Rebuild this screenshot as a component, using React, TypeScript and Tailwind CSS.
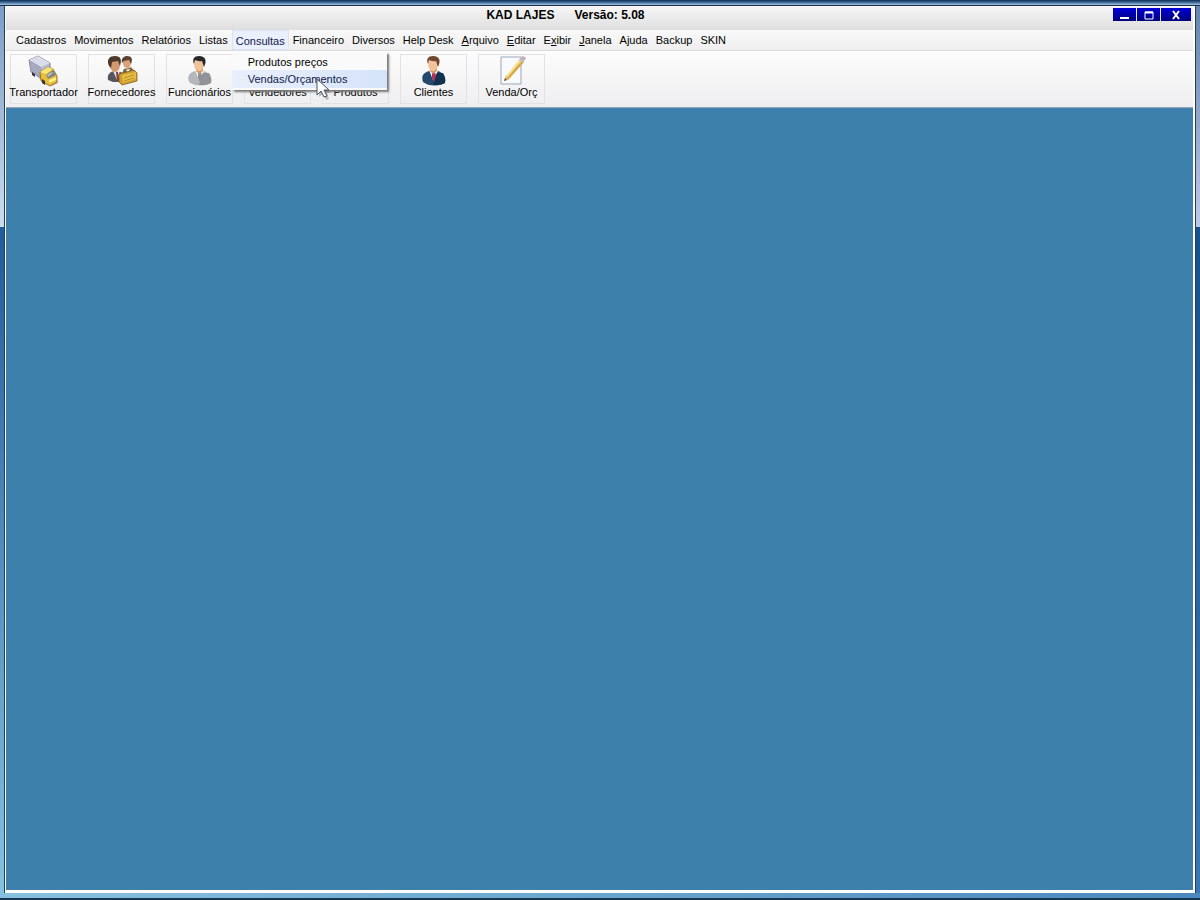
import React, { useState } from 'react'

interface MenuEntry {
  label: string
  hotkey?: number
}

const menus: MenuEntry[] = [
  { label: 'Cadastros' },
  { label: 'Movimentos' },
  { label: 'Relatórios' },
  { label: 'Listas' },
  { label: 'Consultas' },
  { label: 'Financeiro' },
  { label: 'Diversos' },
  { label: 'Help Desk' },
  { label: 'Arquivo', hotkey: 0 },
  { label: 'Editar', hotkey: 0 },
  { label: 'Exibir', hotkey: 1 },
  { label: 'Janela', hotkey: 0 },
  { label: 'Ajuda' },
  { label: 'Backup' },
  { label: 'SKIN' },
]

const consultas = ['Produtos preços', 'Vendas/Orçamentos']

const TruckIcon = () => (
  <svg viewBox="0 0 32 32" className="h-8 w-8" aria-hidden="true">
    <path d="M4 18l4 2 9 9 7 2 6-3-1-4z" fill="#77736a" opacity=".5" />
    <path d="M1 5L10 1l12 7v8l-9 7L3 17z" fill="#b9bbcf" stroke="#65657c" strokeWidth=".8" />
    <path d="M1 5L10 1l12 7-9 4z" fill="#dcddeb" />
    <path d="M1 5l12 7v11L3 17z" fill="#a3a5bd" />
    <path d="M4 9l8 5M4 12l8 5M5 15l7 4" stroke="#b7b9cd" strokeWidth=".6" />
    <path d="M12 17l8-5 5 2 4 7v6l-7 4-9-5z" fill="#e9bd35" stroke="#8d6817" strokeWidth=".8" />
    <path d="M12 17l8-5 5 2-7 5z" fill="#fbe577" />
    <path d="M18 20l7-5 3 5-8 4z" fill="#7f8587" />
    <path d="M19 20l5-3 1 1-5 4z" fill="#b9c0c3" />
    <path d="M21 25l7-3v3l-7 3z" fill="#fff08d" />
    <path d="M4 17l3 2v3l-3-2zM14 24l3 2v4l-3-2z" fill="#34343a" />
  </svg>
)

const SuppliersIcon = () => (
  <svg viewBox="0 0 32 32" className="h-8 w-8" aria-hidden="true">
    <path d="M2 25c-1-6 2-8 6-9l7 1 3 4v6H7z" fill="#55555a" />
    <path d="M7 16l4 9 3-9z" fill="#e5e3e6" />
    <path d="M10 17h2l1 8-2 1z" fill="#8a3a48" />
    <ellipse cx="9" cy="10" rx="5" ry="7" fill="#d39a70" />
    <path d="M3 11C0 4 4 1 9 1c6 0 7 4 5 10l-2-5-6 1-1 6z" fill="#4d382b" />
    <path d="M16 18l3-5 5-1 5 4v7H16z" fill="#66656a" />
    <path d="M19 13l3 5 3-6z" fill="#f5f3f3" />
    <ellipse cx="21" cy="8" rx="4" ry="5" fill="#dba27a" />
    <path d="M16 8c-1-5 2-7 5-7 5 0 6 3 4 8l-2-4-5 1z" fill="#5c4331" />
    <path d="M13 19l15-4 3 3v8l-15 4-3-3z" fill="#cf9d2b" stroke="#84621f" strokeWidth=".8" />
    <path d="M18 18v-3l7-2v3" fill="none" stroke="#8b6722" strokeWidth="1.2" />
    <path d="M16 20l14-3v7l-13 4z" fill="#e6bd43" />
    <path d="M18 23l10-3M18 26l10-3" stroke="#a9802a" strokeWidth=".8" />
  </svg>
)

interface PersonProps {
  hair: string
  coat: string
  shade: string
  tie: string
}

const PersonIcon = ({ hair, coat, shade, tie }: PersonProps) => (
  <svg viewBox="0 0 32 32" className="h-8 w-8" aria-hidden="true">
    <path d="M5 27c-2-6 0-9 6-11h9c6 2 7 6 7 12-6 3-16 4-22-1z" fill={coat} />
    <path d="M18 18l7 0c2 3 3 7 2 10-5 3-9 2-12 2z" fill={shade} />
    <path d="M11 15l4 10 5-9-4-3z" fill="#f7f7f7" />
    <path d="M14 18l3-1 1 4-2 6-2-4z" fill={tie} />
    <path d="M12 10h7v6l-4 3-3-3z" fill="#d99868" />
    <ellipse cx="15" cy="9" rx="5" ry="7" fill="#f1c39b" />
    <path d="M10 9C8 4 10 1 15 1c7 0 8 5 5 11l-2-6c-3 1-6-1-7-1z" fill={hair} />
  </svg>
)

const BoxIcon = () => (
  <svg viewBox="0 0 32 32" className="h-8 w-8" aria-hidden="true">
    <path d="M4 9l12-6 12 6v14l-12 7-12-7z" fill="#d8a85a" />
    <path d="M4 9l12 6 12-6-12-6z" fill="#f2d08d" />
  </svg>
)

const NoteIcon = () => (
  <svg viewBox="0 0 32 32" className="h-8 w-8" aria-hidden="true">
    <path d="M5 2h20v27H5z" fill="#f8fafd" stroke="#9aa6bb" />
    <path d="M9 23l-1 3 4-1L28 7l-4-3z" fill="#f0cd76" />
    <path d="M9 22l3 3L28 7l-2-1z" fill="#d9aa4c" />
    <path d="M10 21L23 5l2 1-14 17z" fill="#fbe08f" />
    <path d="M23 5l2-3 4 2-2 4z" fill="#b7bccb" />
    <path d="M25 2l2-1 3 2-1 2z" fill="#d1a5a8" />
    <path d="M8 26l1-3 2 2z" fill="#5d5445" />
  </svg>
)

const tools = [
  { label: 'Transportador', icon: <TruckIcon /> },
  { label: 'Fornecedores', icon: <SuppliersIcon /> },
  { label: 'Funcionários', icon: <PersonIcon hair="#292727" coat="#b5b8bb" shade="#909498" tie="#8b9197" /> },
  { label: 'Vendedores', icon: <PersonIcon hair="#292727" coat="#b5b8bb" shade="#909498" tie="#8b9197" /> },
  { label: 'Produtos', icon: <BoxIcon /> },
  { label: 'Clientes', icon: <PersonIcon hair="#71462d" coat="#22486d" shade="#12304f" tie="#b33058" /> },
  { label: 'Venda/Orç', icon: <NoteIcon /> },
]

const MenuLabel = ({ label, hotkey }: MenuEntry) => {
  if (hotkey === undefined) return <>{label}</>
  return (
    <>
      {label.slice(0, hotkey)}
      <span className="underline underline-offset-1">{label[hotkey]}</span>
      {label.slice(hotkey + 1)}
    </>
  )
}

const Cursor = () => (
  <svg viewBox="0 0 16 24" className="pointer-events-none absolute left-[84px] top-12 z-20 h-6 w-4" aria-hidden="true">
    <path d="M3 3v16l4-3 3 6 3-1-2-6h4z" fill="#555" opacity=".35" />
    <path d="M1 1v16l4-4 3 6 3-1-3-6h5z" fill="#fff" stroke="#4a5060" />
  </svg>
)

const TitleBar = () => (
  <header className="grid h-6 grid-cols-[1fr_auto_1fr] bg-gradient-to-b from-[#f7f7f7] to-[#dedede]">
    <h1 className="col-start-2 flex gap-5 pr-17 pt-px text-[12px] leading-4 font-bold">
      <span>KAD LAJES</span>
      <span>Versão: 5.08</span>
    </h1>
    <div className="flex justify-end gap-px pr-0.5 pt-0.5">
      <button aria-label="Minimizar" className="flex h-[13px] w-[23px] items-center justify-center bg-gradient-to-b from-[#0000d8] to-[#00007e]">
        <svg viewBox="0 0 10 10" className="h-2.5 w-2.5"><path d="M0 8h9" stroke="#fff" strokeWidth="2" /></svg>
      </button>
      <button aria-label="Maximizar" className="flex h-[13px] w-[23px] items-center justify-center bg-gradient-to-b from-[#0000d8] to-[#00007e]">
        <svg viewBox="0 0 10 10" className="h-2.5 w-2.5"><path d="M1 2h8v7H1z" fill="none" stroke="#fff" /><path d="M1 2.5h8" stroke="#fff" strokeWidth="2" /></svg>
      </button>
      <button aria-label="Fechar" className="flex h-[13px] w-[30px] items-center justify-center bg-gradient-to-b from-[#0000d8] to-[#00007e]">
        <svg viewBox="0 0 10 10" className="h-2.5 w-2.5"><path d="M2 1l6 8M8 1L2 9" stroke="#fff" strokeWidth="2" /></svg>
      </button>
    </div>
  </header>
)

const App = () => {
  const [open, setOpen] = useState('Consultas')

  return (
    <div className="flex min-h-screen flex-col bg-[#236aaa] font-['Liberation_Sans',Arial,sans-serif] text-[11px] text-black">
      {/* top frame */}
      <div className="h-1.5 border-b border-[#1b3046] bg-gradient-to-b from-[#122c4c] via-[#426fa2] to-[#a6c5df]"></div>
      <div className="flex grow">
        {/* left frame */}
        <div className="flex w-[5px] flex-col border-r border-[#243e5d]">
          <div className="h-[221px] bg-gradient-to-b from-[#7e9cc4] to-[#c9dcf0]"></div>
          <div className="grow bg-gradient-to-b from-[#1d5c9d] to-[#82c3e3]"></div>
        </div>
        <div className="flex min-w-0 grow flex-col border-r-2 border-b-[3px] border-l border-white">
          <TitleBar />
          <nav className="relative z-10 flex h-5 bg-gradient-to-b from-[#f9f9f9] to-[#efefef] pl-1.5">
            {menus.map((m) => (
              <div key={m.label} className="relative">
                <button
                  onClick={() => setOpen(open === m.label ? '' : m.label)}
                  className={
                    open === m.label
                      ? 'h-5 border border-[#dde3f2] bg-[#eaf0fd] px-[3px] pt-0.5 leading-4 text-[#10204a]'
                      : 'h-5 px-1 leading-5'
                  }
                >
                  <MenuLabel label={m.label} hotkey={m.hotkey} />
                </button>
                {m.label === 'Consultas' && open === m.label && (
                  <div className="absolute left-0 top-[22px] w-[155px] bg-[#fafafa] pt-px pb-0.5 shadow-[2px_2px_2px_#777]">
                    {consultas.map((item) => (
                      <button key={item} className="block h-[17px] w-full pl-4 text-left leading-4 hover:bg-[#dce8fb] last:h-[18px] last:bg-gradient-to-r last:from-[#e9effc] last:to-[#d5e4fa] last:text-[#10204a]">
                        {item}
                      </button>
                    ))}
                  </div>
                )}
                {m.label === 'Consultas' && <Cursor />}
              </div>
            ))}
          </nav>
          <div className="flex gap-[11px] border-y border-t-[#dcdcdc] border-b-[#9aa5b8] bg-gradient-to-b from-[#fdfdfd] to-[#eeeef0] px-1 py-[3px]">
            {tools.map((t) => (
              <button key={t.label} className="flex h-[50px] w-[67px] flex-col items-center border border-[#e2e2e4] whitespace-nowrap leading-[10px]">
                {t.icon}
                {t.label}
              </button>
            ))}
          </div>
          <main className="grow bg-[#3d80ab]"></main>
        </div>
        {/* right frame */}
        <div className="flex w-[5px] flex-col border-l border-[#243e5d]">
          <div className="h-[221px] bg-gradient-to-b from-[#6685ab] to-[#bdc9e5]"></div>
          <div className="grow bg-gradient-to-b from-[#17508c] to-[#3978b4]"></div>
        </div>
      </div>
      {/* bottom frame */}
      <div className="h-[7px] border-b-2 border-[#16354e] bg-gradient-to-r from-[#86c2df] to-[#4b88bd]"></div>
    </div>
  )
}

export default App
